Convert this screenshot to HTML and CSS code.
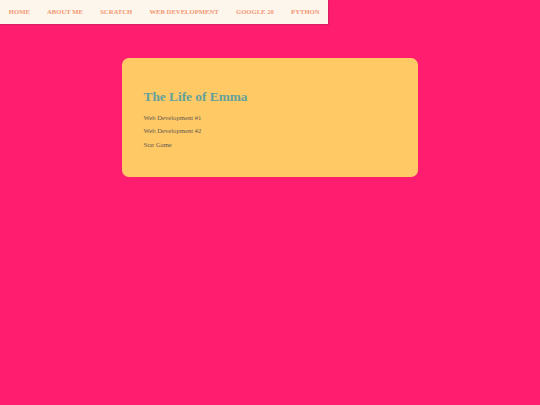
FILE: index.html
```html
<!DOCTYPE html>
<html>
<head>
<meta charset="utf-8">
<link rel="stylesheet" href="styles.css">
</head>
<body>
<nav class="topnav">
  <a class="nav-link" href="#">HOME</a>
  <a class="nav-link" href="#">ABOUT ME</a>
  <a class="nav-link" href="#">SCRATCH</a>
  <a class="nav-link" href="#">WEB DEVELOPMENT</a>
  <a class="nav-link" href="#">GOOGLE 20</a>
  <a class="nav-link" href="#">PYTHON</a>
</nav>
<main class="card">
  <h1 class="title">The Life of Emma</h1>
  <p class="item">Web Development #1</p>
  <p class="item">Web Development #2</p>
  <p class="item">Star Game</p>
</main>
</body>
</html>
```

FILE: styles.css
```css
html, body {
  margin: 0;
  padding: 0;
}
body {
  background: #ff1d6f;
  font-family: "Liberation Serif", "Times New Roman", serif;
  font-size: 6.67px;
}
.topnav {
  display: inline-flex;
  align-items: center;
  height: 24px;
  padding: 0 0.2px;
  background: #fdf6ed;
  box-shadow: 1px 1px 1px rgba(150, 40, 80, 0.35);
}
.nav-link {
  padding: 0 8.6px;
  font-size: 6.67px;
  font-weight: bold;
  color: #f29872;
  text-decoration: none;
  line-height: 24px;
}
.card {
  box-sizing: border-box;
  width: 296px;
  margin: 34px auto 0;
  padding: 22px 21.5px 22.5px;
  background: #ffca66;
  border-radius: 7px;
}
.title {
  margin: 8.9px 0;
  font-size: 13.33px;
  font-weight: bold;
  color: #62a19b;
}
.item {
  margin: 6.67px 0;
  color: #5f584f;
}
```
